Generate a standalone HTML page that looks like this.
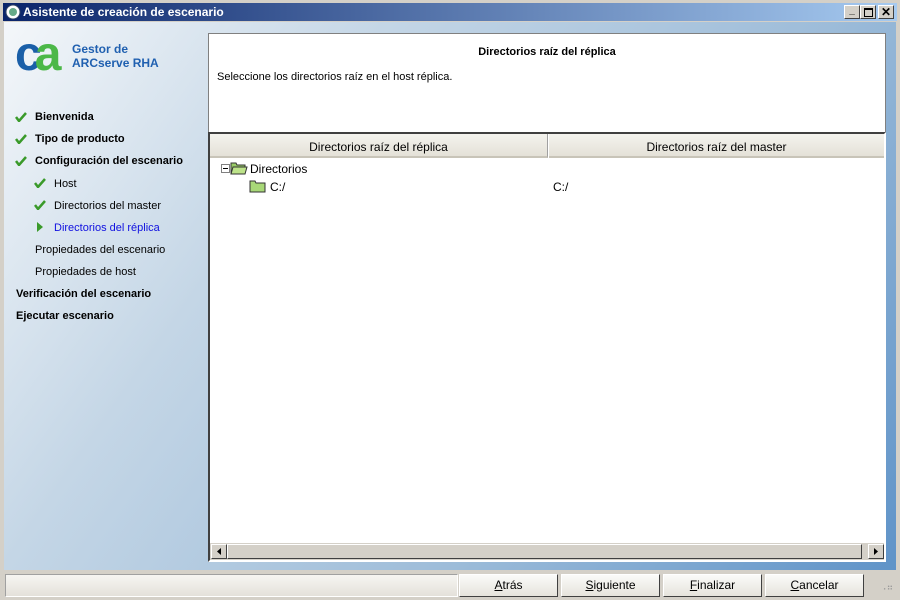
<html><head><style>
body{margin:0;width:900px;height:600px;overflow:hidden;font-family:"Liberation Sans",sans-serif;font-size:11px;background:#d4d0c8;position:relative}
.a{position:absolute}
.title{left:3px;top:3px;width:894px;height:18px;background:linear-gradient(90deg,#0a246a,#a6caf0);color:#fff;font-weight:bold;font-size:12px}
.main{left:4px;top:22px;width:892px;height:548px;background:linear-gradient(125deg,#f4f7fa 0%,#c4d6e6 30%,#9dbcd9 65%,#5f93c8 100%)}
.nav div{position:absolute;font-size:11px;color:#000}
.b{font-weight:bold}
.chk{position:absolute;width:12px;height:10px}
.btn{top:574px;height:21px;width:97px;background:linear-gradient(#fbfbf9,#e6e3dc);border:1px solid;border-color:#fff #404040 #404040 #fff;text-align:center;line-height:21px;font-size:12px}
.sb{width:16px;height:15px;background:#d4d0c8;border:1px solid;border-color:#fff #404040 #404040 #fff;box-sizing:border-box}
</style></head><body>
<div class="a title"><svg class="a" style="left:2px;top:1px" width="16" height="16"><circle cx="8" cy="8" r="7" fill="#fff" stroke="#346"/><circle cx="8" cy="8" r="4" fill="#6a8" /></svg><span class="a" style="left:20px;top:2px">Asistente de creación de escenario</span>
<div class="a sb" style="left:841px;top:2px;width:16px;height:14px;font-size:10px;color:#000;text-align:center;line-height:10px">_</div>
<div class="a sb" style="left:857px;top:2px;width:16px;height:14px"><div class="a" style="left:3px;top:2px;width:7px;height:6px;border:1px solid #000;border-top-width:2px"></div></div>
<div class="a sb" style="left:875px;top:2px;width:16px;height:14px;color:#000;font-weight:bold;text-align:center;line-height:12px">✕</div>
</div>
<div class="a main"></div>
<div class="a" style="left:15px;top:27px;font-weight:bold;font-size:48px;letter-spacing:-7px;color:#1a5fa8;font-family:'Liberation Sans'"><span>c</span><span style="color:#4cb848">a</span></div>
<div class="a" style="left:72px;top:42px;color:#2060b0;font-weight:bold;font-size:12px;line-height:14px">Gestor de<br>ARCserve RHA</div>
<div class="nav">
<svg width="0" height="0"><defs><path id="c" d="M1 5 L4 9 L11 1" stroke="#3a9a2a" stroke-width="2.5" fill="none"/></defs></svg>
<svg class="chk" style="left:15px;top:112px"><use href="#c"/></svg><div class="b" style="left:35px;top:111px">Bienvenida</div>
<svg class="chk" style="left:15px;top:134px"><use href="#c"/></svg><div class="b" style="left:35px;top:133px">Tipo de producto</div>
<svg class="chk" style="left:15px;top:156px"><use href="#c"/></svg><div class="b" style="left:35px;top:155px">Configuración del escenario</div>
<svg class="chk" style="left:34px;top:178px"><use href="#c"/></svg><div style="left:54px;top:178px">Host</div>
<svg class="chk" style="left:34px;top:200px"><use href="#c"/></svg><div style="left:54px;top:200px">Directorios del master</div>
<svg class="chk" style="left:36px;top:222px"><path d="M1 0 L7 5 L1 10Z" fill="#3a9a2a"/></svg><div style="left:54px;top:222px;color:#1010e0">Directorios del réplica</div>
<div style="left:35px;top:244px">Propiedades del escenario</div>
<div style="left:35px;top:266px">Propiedades de host</div>
<div class="b" style="left:16px;top:288px">Verificación del escenario</div>
<div class="b" style="left:16px;top:310px">Ejecutar escenario</div>
</div>
<div class="a" style="left:208px;top:33px;width:676px;height:98px;background:#fff;border:1px solid #808080"></div>
<div class="a b" style="left:209px;top:46px;width:676px;text-align:center">Directorios raíz del réplica</div>
<div class="a" style="left:217px;top:71px">Seleccione los directorios raíz en el host réplica.</div>
<div class="a" style="left:208px;top:132px;width:674px;height:426px;background:#fff;border:2px solid;border-color:#404040 #fff #fff #404040"></div>
<div class="a" style="left:210px;top:134px;width:337px;height:22px;background:linear-gradient(#f4f3ee,#e4e1d8);border-right:1px solid #a0a0a0;border-bottom:2px solid #c8c4b8;text-align:center;line-height:27px;font-size:12px">Directorios raíz del réplica</div>
<div class="a" style="left:549px;top:134px;width:335px;height:22px;background:linear-gradient(#f4f3ee,#e4e1d8);border-bottom:2px solid #c8c4b8;text-align:center;line-height:27px;font-size:12px">Directorios raíz del master</div>
<div class="a" style="left:221px;top:164px;width:7px;height:7px;border:1px solid #808080;background:#fff"><div class="a" style="left:1px;top:3px;width:5px;height:1px;background:#000"></div></div>
<svg class="a" style="left:230px;top:161px" width="18" height="14"><path d="M1 2h5l1 2h8v9H1z" fill="#9c6" stroke="#333"/><path d="M3 6h14l-2 7H1z" fill="#bde38a" stroke="#333"/></svg>
<div class="a" style="left:250px;top:162px;font-size:12px">Directorios</div>
<svg class="a" style="left:249px;top:179px" width="18" height="14"><path d="M1 2h5l1 2h9v9H1z" fill="#a8d878" stroke="#333"/></svg>
<div class="a" style="left:270px;top:180px;font-size:12px">C:/</div>
<div class="a" style="left:553px;top:180px;font-size:12px">C:/</div>
<div class="a" style="left:210px;top:543px;width:674px;height:17px;background:#d4d0c8"></div>
<div class="a sb" style="left:211px;top:544px"><svg width="14" height="13"><path d="M9 3v7L5 6.5z"/></svg></div>
<div class="a" style="left:227px;top:544px;width:635px;height:15px;background:#d4d0c8;border:1px solid;border-color:#fff #404040 #404040 #fff;box-sizing:border-box"></div>
<div class="a sb" style="left:868px;top:544px"><svg width="14" height="13"><path d="M5 3v7L9 6.5z"/></svg></div>
<div class="a" style="left:5px;top:574px;width:451px;height:21px;background:linear-gradient(#f6f5f2,#e4e1da);border:1px solid;border-color:#a0a0a0 #fff #fff #a0a0a0"></div>
<div class="a btn" style="left:459px"><u>A</u>trás</div>
<div class="a btn" style="left:561px"><u>S</u>iguiente</div>
<div class="a btn" style="left:663px"><u>F</u>inalizar</div>
<div class="a btn" style="left:765px"><u>C</u>ancelar</div>
<div class="a" style="left:880px;top:582px;color:#999;font-size:9px">⠠⠶</div>
</body></html>
